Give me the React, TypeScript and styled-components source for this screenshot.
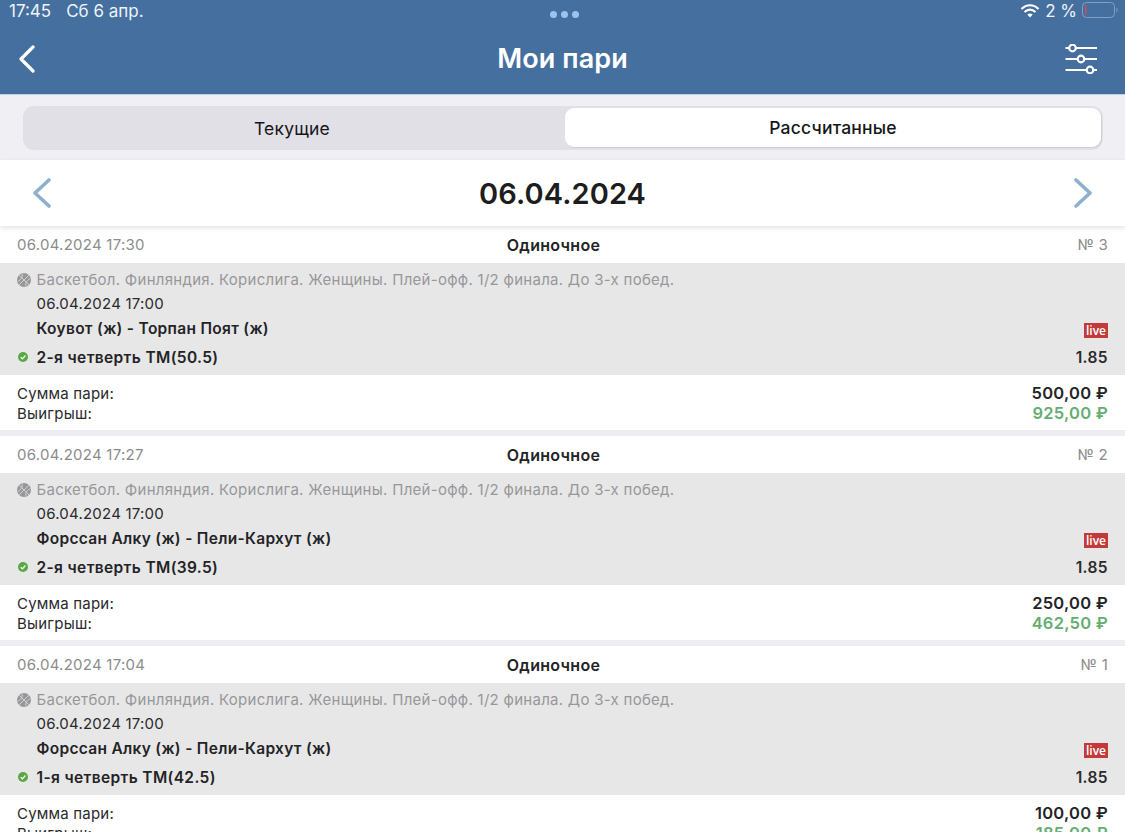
import React from "react";
import styled, { createGlobalStyle } from "styled-components";

const Global = createGlobalStyle`
  html, body { margin: 0; padding: 0; background: #fff; }
  body { font-family: Inter, "Noto Sans", "Liberation Sans", sans-serif; }
`;

const Page = styled.div`
  width: 1125px;
  height: 832px;
  overflow: hidden;
  display: flex;
  flex-direction: column;
  background: #fff;
`;
const Header = styled.header`
  height: 94px;
  flex: none;
  background: #456f9f;
  color: #fff;
  display: flex;
  flex-direction: column;
  border-bottom: 1px solid #c3cfdd;
`;
const StatusBar = styled.div`
  height: 22px;
  padding: 0 6px 0 9px;
  display: grid;
  grid-template-columns: 1fr auto 1fr;
  align-items: center;
  font-size: 17px;
  color: #eef3f8;
`;
const StatusLeft = styled.div`
  display: flex;
  gap: 15px;
  margin-top: -1px;
`;
const Dots = styled.div`
  display: flex;
  gap: 4px;
  margin-top: 6px;
`;
const Dot = styled.span`
  width: 7px;
  height: 7px;
  border-radius: 50%;
  background: #9cc3ee;
`;
const StatusRight = styled.div`
  display: flex;
  justify-content: flex-end;
  align-items: center;
  gap: 5px;
  margin-top: -1px;
`;
const NavBar = styled.div`
  flex: 1;
  display: grid;
  grid-template-columns: 1fr auto 1fr;
  align-items: center;
  padding: 2px 27px 0;
`;
const NavEnd = styled.div`
  display: flex;
  justify-content: flex-end;
`;
const NavStart = styled.div`
  display: flex;
  margin-left: -9px;
`;
const Title = styled.h1`
  margin: 0;
  font-size: 27px;
  line-height: 32px;
  font-weight: 600;
  letter-spacing: 0.1px;
`;
const SegmentBar = styled.div`
  height: 65px;
  flex: none;
  box-sizing: border-box;
  background: #efeff4;
  padding: 11px 22px 10px 23px;
`;
const Segments = styled.div`
  height: 44px;
  display: grid;
  grid-template-columns: 538px 1fr;
  background: #e0e0e6;
  border-radius: 11px;
`;
const Segment = styled.div<{ $active?: boolean }>`
  display: flex;
  align-items: center;
  justify-content: center;
  font-size: 17.5px;
  letter-spacing: 0.2px;
  font-weight: ${(p) => (p.$active ? 500 : 400)};
  color: #16161a;
  background: ${(p) => (p.$active ? "#fff" : "transparent")};
  border-radius: 9px;
  ${(p) => (p.$active ? "margin: 2px 2px 3px 4px; box-shadow: 1px 1px 0 #cfcfd6;" : "")}
`;
const DateBar = styled.div`
  height: 66px;
  flex: none;
  background: #fff;
  display: flex;
  align-items: center;
  justify-content: space-between;
  padding: 0 32px;
  box-shadow: 0 2px 5px rgba(0, 0, 0, 0.12);
  position: relative;
  z-index: 1;
`;
const DateText = styled.div`
  font-size: 29px;
  font-weight: 600;
  color: #1d1d20;
  letter-spacing: 0.1px;
`;
const Card = styled.section`
  flex: none;
  background: #fff;
  margin-bottom: 6px;
`;
const CardList = styled.div`
  flex: 1;
  background: #ededf3;
`;
const CardHead = styled.div`
  height: 37px;
  padding: 0 17px;
  display: grid;
  grid-template-columns: 1fr auto 1fr;
  align-items: center;
  font-size: 15px;
  color: #8c8c8e;
  letter-spacing: 0.25px;
`;
const BetType = styled.div`
  font-size: 16px;
  font-weight: 600;
  color: #232326;
  margin: 0 18px 0 0;
  letter-spacing: 0.3px;
`;
const BetNumber = styled.div`
  text-align: right;
`;
const Body = styled.div`
  height: 112px;
  box-sizing: border-box;
  background: #e7e7e7;
  display: grid;
  grid-template-columns: 19.5px 1fr auto;
  grid-template-rows: 25px 23px 26px 32px;
  padding: 4px 17px 2px;
  align-items: center;
`;
const LeagueIcon = styled.svg`
  width: 14px;
  height: 14px;
`;
const League = styled.div`
  grid-column: 2 / 4;
  font-size: 15px;
  letter-spacing: 0.28px;
  color: #97979a;
`;
const Start = styled.div`
  grid-column: 2 / 4;
  font-size: 15px;
  letter-spacing: 0.22px;
  color: #2a2a2d;
`;
const Teams = styled.div`
  grid-column: 2;
  font-size: 15.5px;
  font-weight: 600;
  letter-spacing: 0.3px;
  color: #232326;
`;
const Live = styled.span`
  justify-self: end;
  align-self: end;
  margin-bottom: 3px;
  background: #c23a3a;
  color: #fff;
  font-size: 12px;
  line-height: 15px;
  padding: 0 2px;
  font-family: "Open Sans", Inter, sans-serif;
  font-weight: 600;
`;
const Check = styled.svg`
  width: 10px;
  height: 10px;
  margin-left: 1px;
`;
const Outcome = styled.div`
  font-size: 15.5px;
  font-weight: 600;
  letter-spacing: 0.36px;
  color: #232326;
`;
const Odds = styled.div`
  font-size: 15.5px;
  font-weight: 600;
  color: #2a2a2d;
  letter-spacing: 0.4px;
`;
const Summary = styled.div`
  height: 55px;
  box-sizing: border-box;
  padding: 8px 17px 0;
  display: grid;
  grid-template-columns: 1fr auto;
  grid-auto-rows: 20px;
  align-items: center;
  font-size: 15px;
  color: #2a2a2d;
  letter-spacing: 0.2px;
`;
const Amount = styled.div<{ $green?: boolean }>`
  text-align: right;
  font-size: 16.5px;
  font-weight: 600;
  letter-spacing: 0.25px;
  color: ${(p) => (p.$green ? "#65ad72" : "#232326")};
`;

const Basketball = () => (
  <LeagueIcon viewBox="0 0 14 14">
    <circle cx="7" cy="7" r="7" fill="#97979a" />
    <g fill="none" stroke="#d8d8d8" strokeWidth="0.9">
      <path d="M2 2.2 L12 11.8 M12 2.2 L2 11.8" />
      <path d="M5 .6 C6 4 4 7 .6 8.4 M9 13.4 C8 10 10 7 13.4 5.6" />
    </g>
  </LeagueIcon>
);
const WinCheck = () => (
  <Check viewBox="0 0 10 10">
    <circle cx="5" cy="5" r="5" fill="#58a845" />
    <path d="M2.7 5.1 L4.4 6.8 L7.4 3.5" fill="none" stroke="#fff" strokeWidth="1.2" />
  </Check>
);

const bets = [
  { placed: "06.04.2024 17:30", no: 3, teams: "Коувот (ж) - Торпан Поят (ж)", outcome: "2-я четверть ТМ(50.5)", sum: "500,00 ₽", win: "925,00 ₽" },
  { placed: "06.04.2024 17:27", no: 2, teams: "Форссан Алку (ж) - Пели-Кархут (ж)", outcome: "2-я четверть ТМ(39.5)", sum: "250,00 ₽", win: "462,50 ₽" },
  { placed: "06.04.2024 17:04", no: 1, teams: "Форссан Алку (ж) - Пели-Кархут (ж)", outcome: "1-я четверть ТМ(42.5)", sum: "100,00 ₽", win: "185,00 ₽" },
];

export default function App() {
  return (
    <Page>
      <Global />
      <Header>
        <StatusBar>
          <StatusLeft>
            <span>17:45</span>
            <span>Сб 6 апр.</span>
          </StatusLeft>
          <Dots>
            <Dot />
            <Dot />
            <Dot />
          </Dots>
          <StatusRight>
            <svg width="20" height="14" viewBox="0 0 19 14">
              <path d="M1 5 C6 0 13 0 18 5 M4 8 C7.5 5 11.5 5 15 8" fill="none" stroke="#fff" strokeWidth="2.2" />
              <path d="M6.8 10.6 C8.5 9.2 10.5 9.2 12.2 10.6 L9.5 13.6 Z" fill="#fff" />
            </svg>
            <span>2 %</span>
            <svg width="37" height="17" viewBox="0 0 37 17">
              <rect x="0.5" y="0.5" width="32" height="15" rx="4" fill="none" stroke="#7f9fc6" />
              <rect x="3" y="3" width="1.5" height="10" fill="#c8504f" />
              <path d="M34.5 5.5 C36 6.5 36 9.5 34.5 10.5 Z" fill="#7f9fc6" />
            </svg>
          </StatusRight>
        </StatusBar>
        <NavBar>
          <NavStart>
            <svg width="18" height="28" viewBox="0 0 18 28">
              <path d="M15 2 L3 14 L15 26" fill="none" stroke="#fff" strokeWidth="3.2" strokeLinecap="round" strokeLinejoin="round" />
            </svg>
          </NavStart>
          <Title>Мои пари</Title>
          <NavEnd>
            <svg width="33" height="30" viewBox="0 0 33 30">
              <g fill="none" stroke="#fff">
                <path d="M0.5 4 H32 M0.5 15 H32 M0.5 26 H32" strokeWidth="1.8" />
                <g fill="#456f9f" strokeWidth="2.2">
                  <circle cx="7.5" cy="4" r="3.3" />
                  <circle cx="16" cy="15" r="3.3" />
                  <circle cx="25" cy="26" r="3.3" />
                </g>
              </g>
            </svg>
          </NavEnd>
        </NavBar>
      </Header>
      <SegmentBar>
        <Segments>
          <Segment>Текущие</Segment>
          <Segment $active>Рассчитанные</Segment>
        </Segments>
      </SegmentBar>
      <DateBar>
        <svg width="20" height="30" viewBox="0 0 20 30">
          <path d="M17 2 L3 15 L17 28" fill="none" stroke="#8fb0cd" strokeWidth="3.6" strokeLinecap="round" strokeLinejoin="round" />
        </svg>
        <DateText>06.04.2024</DateText>
        <svg width="20" height="30" viewBox="0 0 20 30">
          <path d="M3 2 L17 15 L3 28" fill="none" stroke="#8fb0cd" strokeWidth="3.6" strokeLinecap="round" strokeLinejoin="round" />
        </svg>
      </DateBar>
      <CardList>
        {bets.map((b) => (
          <Card key={b.no}>
            <CardHead>
              <div>{b.placed}</div>
              <BetType>Одиночное</BetType>
              <BetNumber>№ {b.no}</BetNumber>
            </CardHead>
            <Body>
              <Basketball />
              <League>Баскетбол. Финляндия. Корислига. Женщины. Плей-офф. 1/2 финала. До 3-х побед.</League>
              <span />
              <Start>06.04.2024 17:00</Start>
              <span />
              <Teams>{b.teams}</Teams>
              <Live>live</Live>
              <WinCheck />
              <Outcome>{b.outcome}</Outcome>
              <Odds>1.85</Odds>
            </Body>
            <Summary>
              <div>Сумма пари:</div>
              <Amount>{b.sum}</Amount>
              <div>Выигрыш:</div>
              <Amount $green>{b.win}</Amount>
            </Summary>
          </Card>
        ))}
      </CardList>
    </Page>
  );
}
